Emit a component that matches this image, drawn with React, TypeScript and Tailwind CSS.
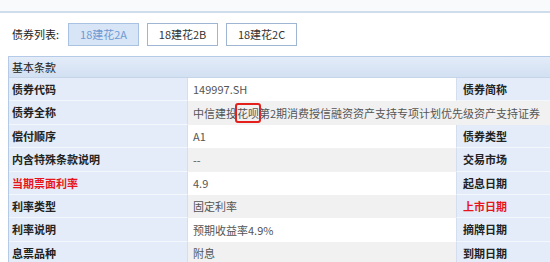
import React from 'react';

type Row = {
  label: string;
  value: React.ReactNode;
  side?: string;
  red?: boolean;
  sideRed?: boolean;
  wide?: boolean;
};

const tabs = ['18建花2A', '18建花2B', '18建花2C'];

const rows: Row[] = [
  { label: '债券代码', value: '149997.SH', side: '债券简称' },
  {
    label: '债券全称',
    value: (
      <>
        中信建投
        <span className="outline-2 outline-[#e3201c] outline-offset-[0px] rounded-[1px]">花呗</span>
        第2期消费授信融资资产支持专项计划优先级资产支持证券
      </>
    ),
    wide: true,
  },
  { label: '偿付顺序', value: 'A1', side: '债券类型' },
  { label: '内含特殊条款说明', value: '--', side: '交易市场' },
  { label: '当期票面利率', value: '4.9', side: '起息日期', red: true },
  { label: '利率类型', value: '固定利率', side: '上市日期', sideRed: true },
  { label: '利率说明', value: '预期收益率4.9%', side: '摘牌日期' },
  { label: '息票品种', value: '附息', side: '到期日期' },
];

const BondInfo: React.FC = () => {
  return (
    <div
      className="w-[550px] h-[262px] overflow-hidden bg-white text-[11px] text-[#333]"
      style={{ fontFamily: '"Microsoft YaHei", "Noto Sans CJK SC", sans-serif' }}
    >
      {/* 顶部条 */}
      <div className="h-[13px] bg-[#f9fafb] border-b-2 border-[#cfdcec]" />

      {/* 债券列表 */}
      <div className="h-[42px] flex items-center pl-[12px]">
        <span className="mr-[9px] text-[#222]">债券列表:</span>
        <div className="flex gap-[8px]">
          {tabs.map((t, i) => (
            <div
              key={t}
              className={
                i === 0
                  ? 'w-[71px] h-[23px] flex items-center justify-center border border-[#a9c2e2] bg-[#d8e5f6] text-[#6e9ad4]'
                  : 'w-[71px] h-[23px] flex items-center justify-center border border-[#9fb5d4] bg-white text-[#333]'
              }
            >
              {t}
            </div>
          ))}
        </div>
      </div>

      {/* 基本条款 */}
      <div className="mt-[1px] ml-[8px] border-t border-l border-[#b4cae6]">
        <div className="h-[21px] flex items-center pl-[3px] bg-gradient-to-b from-[#e3ecf8] to-[#d2e0f2] border-b border-[#c4d5ea] text-[#222]">
          基本条款
        </div>
        {rows.map((r, i) => (
          <div key={r.label} className="h-[23.4px] flex">
            <div
              className={`w-[179px] shrink-0 flex items-center pl-[3px] bg-[#e3ecf8] border-b border-[#f4f8fc] border-r border-r-[#d3dfee] font-bold ${
                r.red ? 'text-[#e8141b]' : 'text-[#222]'
              }`}
            >
              {r.label}
            </div>
            <div
              className={`${r.wide ? 'flex-1' : 'w-[268px] shrink-0'} flex items-center pl-[5px] whitespace-nowrap text-[#555] ${
                i % 2 === 0 ? 'bg-white' : 'bg-[#f1f1f1]'
              }`}
            >
              {r.value}
            </div>
            {!r.wide && (
              <div
                className={`flex-1 flex items-center pl-[6px] bg-[#e3ecf8] border-b border-[#f4f8fc] border-l border-l-[#d3dfee] font-bold ${
                  r.sideRed ? 'text-[#e8141b]' : 'text-[#222]'
                }`}
              >
                {r.side}
              </div>
            )}
          </div>
        ))}
      </div>
    </div>
  );
};

export default function App() {
  return <BondInfo />;
}
